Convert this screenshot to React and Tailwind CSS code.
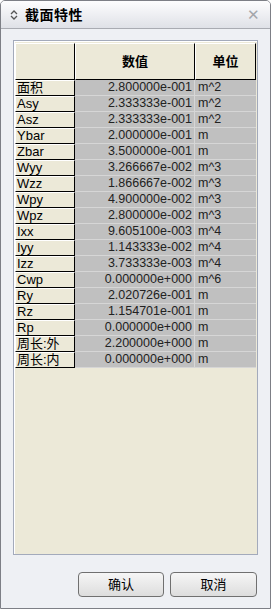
import React from "react";

const rows = [
  ["面积", "2.800000e-001", "m^2"],
  ["Asy", "2.333333e-001", "m^2"],
  ["Asz", "2.333333e-001", "m^2"],
  ["Ybar", "2.000000e-001", "m"],
  ["Zbar", "3.500000e-001", "m"],
  ["Wyy", "3.266667e-002", "m^3"],
  ["Wzz", "1.866667e-002", "m^3"],
  ["Wpy", "4.900000e-002", "m^3"],
  ["Wpz", "2.800000e-002", "m^3"],
  ["Ixx", "9.605100e-003", "m^4"],
  ["Iyy", "1.143333e-002", "m^4"],
  ["Izz", "3.733333e-003", "m^4"],
  ["Cwp", "0.000000e+000", "m^6"],
  ["Ry", "2.020726e-001", "m"],
  ["Rz", "1.154701e-001", "m"],
  ["Rp", "0.000000e+000", "m"],
  ["周长:外", "2.200000e+000", "m"],
  ["周长:内", "0.000000e+000", "m"],
];

const font = { fontFamily: '"Liberation Sans", "Noto Sans CJK SC", sans-serif' };

export default function App() {
  return (
    <div
      className="w-[271px] h-[609px] flex flex-col bg-[#eef0f4] border border-[#7d7f86] rounded-t-[5px] overflow-hidden text-black"
      style={font}
    >
      {/* Title bar */}
      <div className="h-[28px] shrink-0 flex items-center bg-gradient-to-b from-[#fdfdfe] to-[#dfe1e7] border-b border-[#a9abb2]">
        <svg width="8" height="10" viewBox="0 0 8 10" className="ml-[9px]">
          <path d="M1 4 L4 1 L7 4" fill="none" stroke="#555" strokeWidth="1.3" />
          <path d="M1 6 L4 9 L7 6" fill="none" stroke="#555" strokeWidth="1.3" />
        </svg>
        <span className="ml-[7px] text-[14px] font-bold leading-none tracking-[0.5px]">截面特性</span>
        <span className="ml-auto mr-[10px] text-[#a3a6ab] text-[15px] leading-none">✕</span>
      </div>

      {/* Body */}
      <div className="flex-1 flex flex-col pl-[12px] pr-[12px] pt-[11px]">
        <div className="h-[515px] border border-[#a3aabb] shadow-[inset_1px_1px_0_#ffffff] bg-[#ece9d8] pl-[1px] pt-[2px]">
          <div className="w-[241px] text-[12.5px]">
            {/* Header */}
            <div className="flex h-[37px]">
              <div className="w-[60px] bg-[#ece9d8] border-t border-l border-white border-r border-b border-r-black border-b-black" />
              <div className="w-[120px] bg-[#ece9d8] border-t border-l border-white border-r border-b border-r-black border-b-black flex items-center justify-center font-bold text-[13px]">
                数值
              </div>
              <div className="w-[61px] bg-[#ece9d8] border-t border-l border-white border-r border-b border-r-black border-b-black flex items-center justify-center font-bold text-[13px]">
                单位
              </div>
            </div>
            {rows.map(([k, v, u]) => (
              <div key={k} className="flex h-[16px]">
                <div className="w-[60px] bg-[#ece9d8] border-t border-l border-white border-r border-b border-r-black border-b-black pl-[1px] leading-[14px] text-[13px] whitespace-nowrap overflow-hidden">
                  {k}
                </div>
                <div className="w-[120px] bg-[#c0c0c0] border-b border-r border-[#d6d6d6] pr-[2px] text-right leading-[15px] text-[#222]">
                  {v}
                </div>
                <div className="w-[61px] bg-[#c0c0c0] border-b border-[#d6d6d6] pl-[3px] leading-[15px] text-[#222]">
                  {u}
                </div>
              </div>
            ))}
          </div>
        </div>

        {/* Buttons */}
        <div className="flex justify-end gap-[6px] mt-[17px] mr-[1px]">
          <button className="w-[86px] h-[25px] rounded-[4px] border border-[#707070] bg-gradient-to-b from-[#f6f6f6] to-[#dddddd] text-[13px] leading-none">
            确认
          </button>
          <button className="w-[87px] h-[25px] rounded-[4px] border border-[#707070] bg-gradient-to-b from-[#f6f6f6] to-[#dddddd] text-[13px] leading-none">
            取消
          </button>
        </div>
      </div>
    </div>
  );
}
